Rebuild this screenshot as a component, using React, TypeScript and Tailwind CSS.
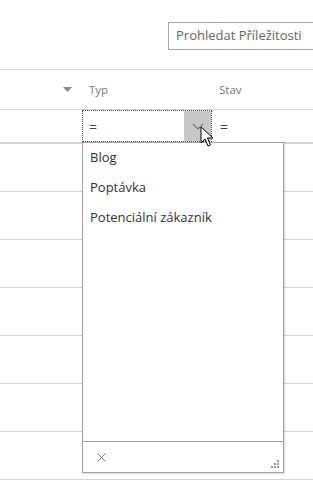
import { X } from 'lucide-react';

const rows = [0, 1, 2, 3, 4, 5, 6];
const options = ['Blog', 'Poptávka', 'Potenciální zákazník'];

const App = () => {
  return (
    <main
      className="relative h-[486px] w-[313px] overflow-hidden bg-white text-[#333]"
      style={{ fontFamily: '"Open Sans", "Noto Sans", sans-serif' }}
    >
      {/* search */}
      <div className="flex h-[69px] justify-start pl-[168px] pt-[22px]">
        <div className="flex h-[28px] w-[170px] shrink-0 items-center border border-[#a6a6a6] pl-[7px] text-[13px] text-[#666]">
          Prohledat Příležitosti
        </div>
      </div>

      {/* header */}
      <div className="flex h-[40px] items-center border-t border-[#d4d4d4] text-[11.5px] text-[#777]">
        <div className="flex w-[82px] justify-end pr-[10px]">
          <svg width="9" height="5" viewBox="0 0 9 5">
            <path d="M0 0h9L4.5 5z" fill="#8a8a8a" />
          </svg>
        </div>
        <div className="w-[130px] pl-[7px]">Typ</div>
        <div className="pl-[7px]">Stav</div>
      </div>

      {/* filter row */}
      <div className="flex h-[35px] border-y border-b-2 border-[#d4d4d4] text-[14px] text-[#444]">
        <div className="w-[82px]" />
        <div className="flex w-[130px] border border-dotted border-[#444]">
          <div className="flex flex-1 items-center pl-[6px]">=</div>
          <div className="flex w-[27px] items-center justify-center bg-[#c8c8c8]">
            <svg width="12" height="7" viewBox="0 0 12 7">
              <path d="M1 1l5 5 5-5" fill="none" stroke="#777" strokeWidth="1.2" />
            </svg>
          </div>
        </div>
        <div className="flex items-center pl-[8px]">=</div>
      </div>

      {/* rows */}
      {rows.map((r) => (
        <div key={r} className="h-[48px] border-b border-[#d4d4d4]" />
      ))}

      {/* dropdown */}
      <div className="absolute left-[82px] top-[142px] flex h-[331px] w-[202px] flex-col border border-[#a0a0a0] bg-white shadow-[1px_1px_2px_rgba(0,0,0,0.15)]">
        <ul className="flex-1 text-[13px] text-[#333]">
          {options.map((o) => (
            <li key={o} className="flex h-[30px] items-center pl-[7px]">
              {o}
            </li>
          ))}
        </ul>
        <div className="relative flex h-[31px] items-center border-t border-[#a0a0a0] pl-[11px]">
          <X size={15} strokeWidth={1.6} className="text-[#777]" />
          <svg className="absolute bottom-[3px] right-[3px]" width="10" height="10" viewBox="0 0 10 10">
            <rect x="7" y="1" width="2" height="2" fill="#999" />
            <rect x="4" y="4" width="2" height="2" fill="#999" />
            <rect x="7" y="4" width="2" height="2" fill="#999" />
            <rect x="1" y="7" width="2" height="2" fill="#999" />
            <rect x="4" y="7" width="2" height="2" fill="#999" />
            <rect x="7" y="7" width="2" height="2" fill="#999" />
          </svg>
        </div>
      </div>

      {/* cursor */}
      <svg className="absolute left-[200px] top-[126px]" width="14" height="22" viewBox="0 0 14 22">
        <path
          d="M1 1v16l4-4 3 7 2.5-1-3-7h5.5z"
          fill="#fff"
          stroke="#000"
          strokeWidth="1"
          strokeLinejoin="round"
        />
      </svg>
    </main>
  );
};

export default App;
